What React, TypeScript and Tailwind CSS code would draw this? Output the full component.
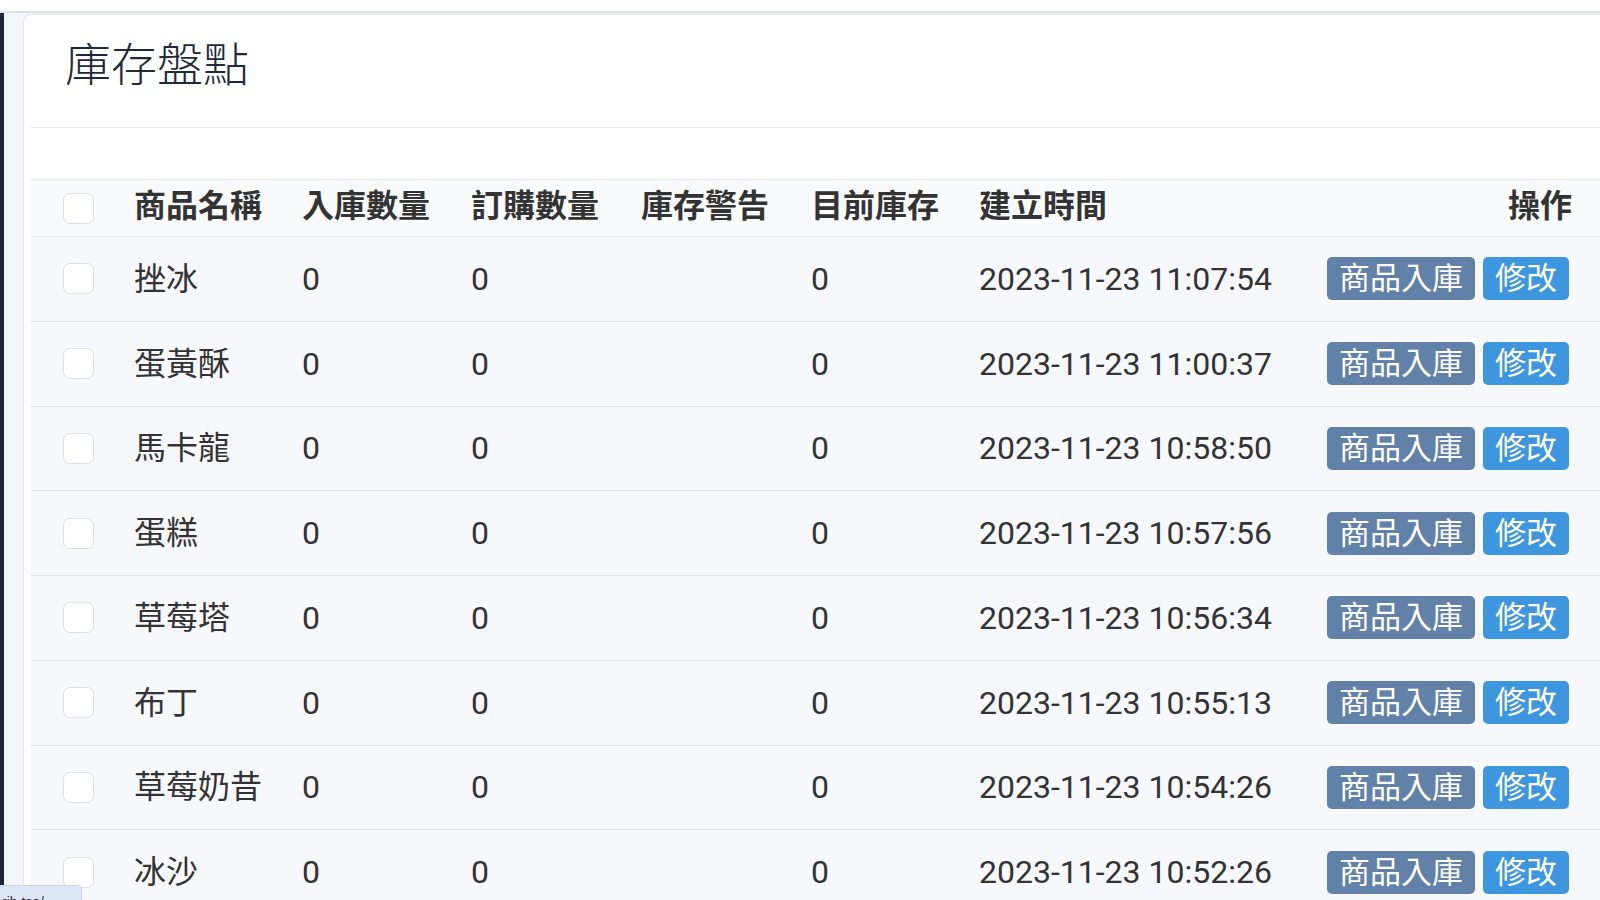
import React from 'react';

interface StockRow {
  name: string;
  inbound: number;
  ordered: number;
  warning: string;
  current: number;
  createdAt: string;
}

const rows: StockRow[] = [
  { name: '挫冰', inbound: 0, ordered: 0, warning: '', current: 0, createdAt: '2023-11-23 11:07:54' },
  { name: '蛋黃酥', inbound: 0, ordered: 0, warning: '', current: 0, createdAt: '2023-11-23 11:00:37' },
  { name: '馬卡龍', inbound: 0, ordered: 0, warning: '', current: 0, createdAt: '2023-11-23 10:58:50' },
  { name: '蛋糕', inbound: 0, ordered: 0, warning: '', current: 0, createdAt: '2023-11-23 10:57:56' },
  { name: '草莓塔', inbound: 0, ordered: 0, warning: '', current: 0, createdAt: '2023-11-23 10:56:34' },
  { name: '布丁', inbound: 0, ordered: 0, warning: '', current: 0, createdAt: '2023-11-23 10:55:13' },
  { name: '草莓奶昔', inbound: 0, ordered: 0, warning: '', current: 0, createdAt: '2023-11-23 10:54:26' },
  { name: '冰沙', inbound: 0, ordered: 0, warning: '', current: 0, createdAt: '2023-11-23 10:52:26' },
];

const cols = 'grid grid-cols-[103px_168px_169px_170px_170px_168px_1fr_auto] items-center';

const Checkbox: React.FC = () => (
  <div className="w-[31px] h-[31px] rounded-[7px] border border-[#dcdfe6] bg-white" />
);

const App: React.FC = () => {
  return (
    <div className="relative w-[1600px] h-[900px] overflow-hidden bg-white flex flex-col font-[Roboto,'Noto_Sans_CJK_TC',sans-serif] text-[#333]">
      {/* top bar edge */}
      <div className="h-[13px] shrink-0 bg-white border-b-2 border-[#e0e1e3]" />

      <div className="flex flex-1 min-h-0">
        {/* sidebar edge */}
        <div className="w-[4px] shrink-0 bg-[#1c2636]" />

        <div className="flex-1 min-w-0 bg-[#f4f6fa] pl-[19px] pt-[1px]">
          <div className="h-full bg-white rounded-tl-[8px] border-l border-t border-[#e3e6ec] pl-[7px] flex flex-col">
            {/* Header */}
            <div className="h-[113px] shrink-0 border-b border-[#e6e8ec] pl-[34px] pt-[16px]">
              <h1 className="text-[46px] leading-[1.5] font-light text-[#1f2937]">庫存盤點</h1>
            </div>

            <div className="h-[51px] shrink-0" />

            {/* Table */}
            <div className="w-[1580px]">
              <div className={`${cols} h-[58px] bg-[#f9fafc] border-t border-b border-[#e3e5ea] text-[32px] font-bold`}>
                <div className="pl-[32px]">
                  <Checkbox />
                </div>
                <div className="pb-[5px]">商品名稱</div>
                <div className="pb-[5px]">入庫數量</div>
                <div className="pb-[5px]">訂購數量</div>
                <div className="pb-[5px]">庫存警告</div>
                <div className="pb-[5px]">目前庫存</div>
                <div className="pb-[5px]">建立時間</div>
                <div className="pb-[5px] pr-[39px] text-right">操作</div>
              </div>

              {rows.map((row) => (
                <div
                  key={row.createdAt}
                  className={`${cols} h-[84.75px] bg-[#f7f8fb] border-b border-[#dfe1e6] text-[32px]`}
                >
                  <div className="pl-[32px]">
                    <Checkbox />
                  </div>
                  <div>{row.name}</div>
                  <div>{row.inbound}</div>
                  <div>{row.ordered}</div>
                  <div>{row.warning}</div>
                  <div>{row.current}</div>
                  <div>{row.createdAt}</div>
                  <div className="flex gap-[8px] pr-[42px]">
                    <button className="h-[43px] px-[12px] rounded-[5px] bg-[#6281a8] text-white text-[31px] leading-[43px]">
                      商品入庫
                    </button>
                    <button className="h-[43px] px-[12px] rounded-[5px] bg-[#3e96de] text-white text-[31px] leading-[43px]">
                      修改
                    </button>
                  </div>
                </div>
              ))}
            </div>
          </div>
        </div>
      </div>

      {/* browser status bubble */}
      <div className="absolute left-0 top-[885px] w-[82px] h-[24px] rounded-tr-[5px] bg-[#dde7f7] border-t border-r border-[#cbd6ea] pl-[2px] pt-[7px] text-[14px] leading-[18px] text-[#333] font-['Liberation_Sans',sans-serif] overflow-hidden">
        rib.tso/
      </div>
    </div>
  );
};

export default App;
